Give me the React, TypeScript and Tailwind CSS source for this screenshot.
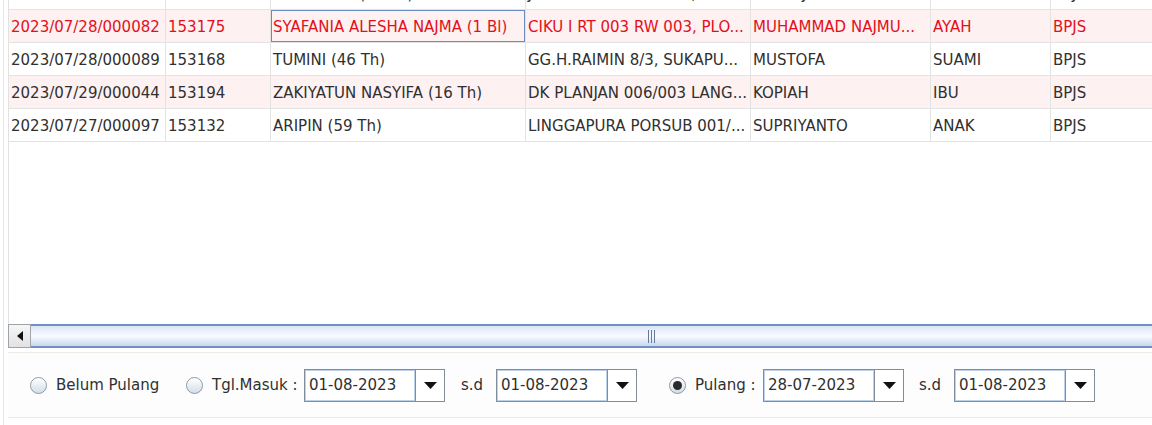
import React from "react";

type Row = { c: string[]; red?: boolean; pink?: boolean; focus?: number };

const widths = ["w-[157px]", "w-[105px]", "w-[255px]", "w-[225px]", "w-[180px]", "w-[120px]", "flex-1"];

const rows: Row[] = [
  { c: ["2023/07/28/000079", "153160", "WARSINAH (63 Th)", "JL. KENANGA 012/004, KALI...", "SUTARJO", "SUAMI", "BPJS"] },
  { c: ["2023/07/28/000082", "153175", "SYAFANIA ALESHA NAJMA (1 Bl)", "CIKU I RT 003 RW 003, PLO...", "MUHAMMAD NAJMU...", "AYAH", "BPJS"], red: true, pink: true, focus: 2 },
  { c: ["2023/07/28/000089", "153168", "TUMINI (46 Th)", "GG.H.RAIMIN 8/3, SUKAPU...", "MUSTOFA", "SUAMI", "BPJS"] },
  { c: ["2023/07/29/000044", "153194", "ZAKIYATUN NASYIFA (16 Th)", "DK PLANJAN 006/003 LANG...", "KOPIAH", "IBU", "BPJS"], pink: true },
  { c: ["2023/07/27/000097", "153132", "ARIPIN (59 Th)", "LINGGAPURA PORSUB 001/...", "SUPRIYANTO", "ANAK", "BPJS"] },
];

function Radio({ checked }: { checked?: boolean }) {
  return (
    <div className="w-[17px] h-[17px] rounded-full border border-[#8d99a6] bg-gradient-to-b from-[#ffffff] to-[#d3dde9] flex items-center justify-center shrink-0 shadow-[inset_0_1px_1px_rgba(255,255,255,0.9)]">
      {checked && <div className="w-[9px] h-[9px] rounded-full bg-[#2a2a2a]" />}
    </div>
  );
}

function Combo({ value }: { value: string }) {
  return (
    <div className="flex h-[33px] shrink-0">
      <div className="w-[112px] h-full border border-[#7f8d9c] bg-white">
        <div className="h-full w-full border border-[#bcd2ea] flex items-center pl-[3px] pt-[1px] text-[#303030]">
          {value}
        </div>
      </div>
      <div className="w-[29px] h-full border border-l-0 border-[#7f8d9c] bg-white flex items-center justify-center">
        <svg width="13" height="7" viewBox="0 0 13 7">
          <polygon points="0,0 13,0 6.5,7" fill="#111" />
        </svg>
      </div>
    </div>
  );
}

export default function App() {
  return (
    <div className="w-[1152px] h-[425px] bg-white overflow-hidden pl-[3px] font-['DejaVu_Sans',sans-serif] text-[15px] leading-none">
      <div className="h-full border-l border-[#e6e6e6] pl-[4px] flex flex-col">
        {/* table viewport */}
        <div className="h-[324px] border-l border-[#e2e2e2] overflow-hidden">
          <div className="mt-[-23px]">
            {rows.map((r, i) => (
              <div
                key={i}
                className={`flex h-[33px] border-b border-[#e3e3e3] ${r.pink ? "bg-[#fdf1f1]" : "bg-white"} ${r.red ? "text-[#e3101c]" : "text-[#303030]"}`}
              >
                {r.c.map((t, j) => (
                  <div
                    key={j}
                    className={`${widths[j]} shrink-0 relative h-full flex items-center pl-[2px] pt-[3px] whitespace-nowrap overflow-hidden ${j < 6 ? "border-r border-[#e3e3e3]" : ""}`}
                  >
                    {r.focus === j && <div className="absolute inset-0 border border-[#6a8ac2]" />}
                    {t}
                  </div>
                ))}
              </div>
            ))}
          </div>
        </div>
        {/* horizontal scrollbar */}
        <div className="h-[24px] flex shrink-0">
          <div className="w-[23px] h-full border border-[#9ea4ab] bg-gradient-to-b from-[#f6f6f6] to-[#e2e2e2] flex items-center justify-center">
            <svg width="6" height="10" viewBox="0 0 6 10">
              <polygon points="6,0 6,10 0,5" fill="#111" />
            </svg>
          </div>
          <div className="flex-1 h-full border-y-2 border-[#7390c6] bg-gradient-to-b from-[#dbe5f4] via-[#f8fbff] to-[#c8d7ee] flex items-center">
            <div className="ml-[617px] flex gap-[2px]">
              <div className="w-[1px] h-[13px] bg-[#66799c]" />
              <div className="w-[1px] h-[13px] bg-[#66799c]" />
              <div className="w-[1px] h-[13px] bg-[#66799c]" />
            </div>
          </div>
        </div>
        <div className="h-[4px] shrink-0" />
        {/* bottom filter panel */}
        <div className="h-[66px] shrink-0 border-y border-[#ebebe6] bg-[#fdfdfd] flex items-center pl-[22px] text-[#303030]">
          <Radio />
          <span className="ml-[9px] w-[100px] whitespace-nowrap">Belum Pulang</span>
          <div className="ml-[30px]"><Radio /></div>
          <span className="ml-[9px] w-[85px] whitespace-nowrap">Tgl.Masuk :</span>
          <div className="ml-[7px]"><Combo value="01-08-2023" /></div>
          <span className="ml-[16px] w-[23px] whitespace-nowrap">s.d</span>
          <div className="ml-[12px]"><Combo value="01-08-2023" /></div>
          <div className="ml-[32px]"><Radio checked /></div>
          <span className="ml-[9px] w-[60px] whitespace-nowrap">Pulang :</span>
          <div className="ml-[8px]"><Combo value="28-07-2023" /></div>
          <span className="ml-[15px] w-[22px] whitespace-nowrap">s.d</span>
          <div className="ml-[13px]"><Combo value="01-08-2023" /></div>
        </div>
      </div>
    </div>
  );
}
